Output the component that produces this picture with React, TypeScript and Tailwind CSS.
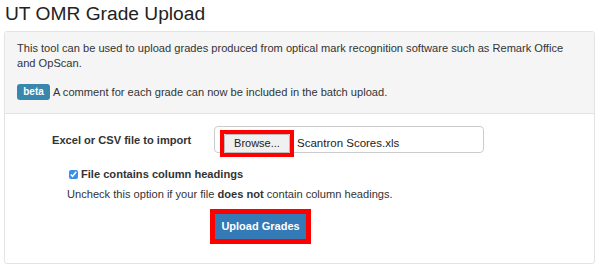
import React from 'react';

export default function App() {
  return (
    <div className="w-[600px] h-[269px] bg-white overflow-hidden font-['Liberation_Sans',Arial,sans-serif] text-[#333] text-[11.1px]">
      <h1 className="pl-[5px] pt-[2px] h-[31px] text-[19.2px] leading-[24px] text-[#222]">UT OMR Grade Upload</h1>

      <div className="ml-[4px] w-[591px] h-[233px] border border-[#e3e3e3] rounded-[3px] overflow-hidden flex flex-col">
        {/* Intro well */}
        <div className="h-[82px] bg-[#f5f5f5] border-b border-[#e3e3e3] pl-[12px] pr-3 pt-[9px]">
          <p className="leading-[15px]">
            This tool can be used to upload grades produced from optical mark recognition software such as Remark Office and OpScan.
          </p>
          <p className="mt-[13px] flex items-center leading-[16px]">
            <span className="inline-flex items-center justify-center w-[33px] h-[16px] rounded-[3px] bg-[#3a87ad] text-white text-[10px] font-bold mr-[3px]">
              beta
            </span>
            A comment for each grade can now be included in the batch upload.
          </p>
        </div>

        {/* Form */}
        <div className="flex-1 pt-[12px]">
          <div className="flex items-start">
            <label className="w-[209px] pl-[47px] pt-[6px] font-bold leading-[16px]">Excel or CSV file to import</label>
            <div className="w-[270px] h-[27px] border border-[#ccc] rounded-[4px] flex items-center pl-[5px]">
              <div className="border-[4px] border-[#ff0000] translate-y-[4px]">
                <button className="w-[66px] h-[19px] bg-[#f0f0f0] border border-[#bbb] rounded-[2px] text-[11px] leading-[17px] text-[#222]">
                  Browse...
                </button>
              </div>
              <span className="ml-[3px] text-[11.5px] text-[#222] translate-y-[4px]">Scantron Scores.xls</span>
            </div>
          </div>

          <div className="mt-[13px] pl-[64px] flex items-center">
            <input type="checkbox" defaultChecked className="w-[9px] h-[9px] accent-[#3b8ee8] m-0" />
            <span className="ml-[3px] font-bold leading-[16px]">File contains column headings</span>
          </div>

          <p className="mt-[4px] pl-[62px] leading-[16px]">
            Uncheck this option if your file <b>does not</b> contain column headings.
          </p>

          <div className="mt-[7px] pl-[205px]">
            <div className="inline-block border-[5px] border-[#ff0000]">
              <button className="w-[91px] h-[25px] bg-[#337ab7] text-white text-[11px] font-bold leading-[25px]">
                Upload Grades
              </button>
            </div>
          </div>
        </div>
      </div>
    </div>
  );
}
